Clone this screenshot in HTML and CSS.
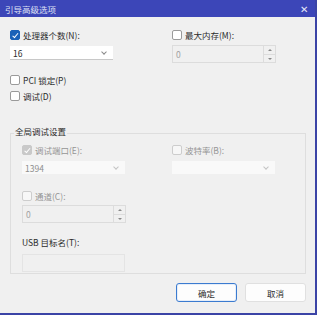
FILE: index.html
```html
<!DOCTYPE html>
<html lang="zh-CN">
<head>
  <meta charset="UTF-8" />
  <title>引导高级选项</title>
  <link rel="stylesheet" href="styles.css">
</head>
<body>
  <div class="window">
    <div class="titlebar">
      <span class="title">引导高级选项</span>
      <span class="close">✕</span>
    </div>

    <div class="content">
      <div class="row top-row">
        <div class="field">
          <label class="check"><span class="box checked"></span>处理器个数(N):</label>
          <div class="select">16<span class="caret"></span></div>
        </div>
        <div class="field">
          <label class="check"><span class="box"></span>最大内存(M):</label>
          <div class="spin disabled"><span class="value">0</span><span class="arrows"><i class="up"></i><i class="down"></i></span></div>
        </div>
      </div>

      <label class="check single pci"><span class="box"></span>PCI 锁定(P)</label>
      <label class="check single"><span class="box"></span>调试(D)</label>

      <div class="group">
        <div class="legend">全局调试设置</div>
        <div class="row inner-row">
          <div class="field">
            <label class="check dim"><span class="box checked gray"></span>调试端口(E):</label>
            <div class="select disabled">1394<span class="caret"></span></div>
          </div>
          <div class="field">
            <label class="check dim"><span class="box"></span>波特率(B):</label>
            <div class="select disabled"><span class="caret"></span></div>
          </div>
        </div>
        <div class="field channel">
          <label class="check dim"><span class="box"></span>通道(C):</label>
          <div class="spin disabled"><span class="value">0</span><span class="arrows"><i class="up"></i><i class="down"></i></span></div>
        </div>
        <div class="field usb">
          <div class="label">USB 目标名(T):</div>
          <div class="input disabled"></div>
        </div>
      </div>

      <div class="buttons">
        <button class="btn default">确定</button>
        <button class="btn">取消</button>
      </div>
    </div>
  </div>
</body>
</html>
```

FILE: styles.css
```css
body {
  margin: 0;
  padding: 0;
  background: #3b44a6;
  font-family: "Noto Sans CJK SC", "Noto Sans", sans-serif;
  font-size: 8.5px;
  color: #2b2b2b;
}

.window {
  width: 315px;
  height: 313px;
  background: #f0f0f0;
  border-right: 2px solid #3b44a6;
  overflow: hidden;
}

.titlebar {
  height: 17px;
  background: #3c46b8;
  display: flex;
  align-items: center;
  justify-content: space-between;
  padding: 0 7px 0 5px;
}

.title {
  color: #dfe1f5;
  font-size: 8.5px;
}

.close {
  color: #e6e8f8;
  font-size: 10px;
  line-height: 1;
}

.content {
  padding: 12px 9px 0 10px;
}

.row {
  display: flex;
}

.top-row {
  gap: 59px;
}

.field {
  width: 103px;
  display: flex;
  flex-direction: column;
}

.check {
  display: flex;
  align-items: center;
  gap: 3px;
  height: 12px;
  line-height: 12px;
}

.check.dim {
  color: #959595;
}

.box {
  width: 8px;
  height: 8px;
  border: 1px solid #9a9a9a;
  border-radius: 2px;
  background: #fff;
  position: relative;
  flex-shrink: 0;
}

.check.dim .box {
  border-color: #cdcdcd;
  background: #f7f7f7;
}

.box.checked {
  background: #1b62b8;
  border-color: #1b62b8;
}

.check.dim .box.checked {
  background: #c9c9c9;
  border-color: #c9c9c9;
}

.box.checked::after {
  content: "";
  position: absolute;
  left: 2.5px;
  top: 0.5px;
  width: 2px;
  height: 4.5px;
  border: solid #fff;
  border-width: 0 1px 1px 0;
  transform: rotate(40deg);
}

.select {
  margin-top: 5px;
  height: 14px;
  background: #fff;
  border-bottom: 1px solid #c8c8c8;
  display: flex;
  align-items: center;
  padding: 0 7px 0 3px;
  box-sizing: border-box;
}

.select.disabled {
  background: #f9f9f9;
  border-bottom: none;
  color: #8e8e8e;
  height: 13px;
}

.caret {
  width: 3px;
  height: 3px;
  margin-left: auto;
  border: solid #8a8a8a;
  border-width: 0 1px 1px 0;
  transform: rotate(45deg);
  margin-top: -2px;
}

.select.disabled .caret {
  border-color: #c4c4c4;
}

.spin {
  margin-top: 4px;
  height: 18px;
  width: 104px;
  box-sizing: border-box;
  border: 1px solid #dcdcdc;
  display: flex;
  justify-content: space-between;
  color: #a0a0a0;
}

.spin .value {
  padding: 2px 0 0 3px;
}

.arrows {
  width: 11px;
  border-left: 1px solid #dcdcdc;
  display: flex;
  flex-direction: column;
}

.arrows i {
  flex: 1;
  position: relative;
}

.arrows i.up {
  border-bottom: 1px solid #dcdcdc;
}

.arrows i::after {
  content: "";
  position: absolute;
  left: 3.5px;
  top: 3px;
  border-left: 2px solid transparent;
  border-right: 2px solid transparent;
}

.arrows i.up::after {
  border-bottom: 2px solid #888;
}

.arrows i.down::after {
  border-top: 2px solid #888;
}

.single.pci {
  margin-top: 11px;
}

.single {
  margin-top: 4px;
}

.group {
  margin-top: 31px;
  width: 296px;
  height: 141px;
  box-sizing: border-box;
  border: 1px solid #dedede;
  position: relative;
  padding: 10px 0 0 11px;
}

.legend {
  position: absolute;
  left: 3px;
  top: -9px;
  background: #f0f0f0;
  padding: 0 1px;
  line-height: 12px;
}

.inner-row {
  gap: 47px;
}

.channel {
  margin-top: 17px;
}

.channel .check {
  height: 10px;
}

.usb {
  margin-top: 13px;
}

.usb .label {
  line-height: 12px;
}

.input {
  margin-top: 6px;
  height: 18px;
  width: 103px;
  box-sizing: border-box;
  border: 1px solid #e4e4e4;
}

.buttons {
  display: flex;
  justify-content: flex-end;
  gap: 8px;
  margin-top: 9px;
  width: 296px;
}

.btn {
  width: 61px;
  height: 19px;
  font-family: inherit;
  font-size: 8.5px;
  color: #2b2b2b;
  background: #fdfdfd;
  border: 1px solid #e0e0e0;
  border-radius: 3px;
  padding: 0;
}

.btn.default {
  border: 1px solid #3b7bd0;
  box-shadow: inset 0 0 0 1px #e6eef9;
}
```
